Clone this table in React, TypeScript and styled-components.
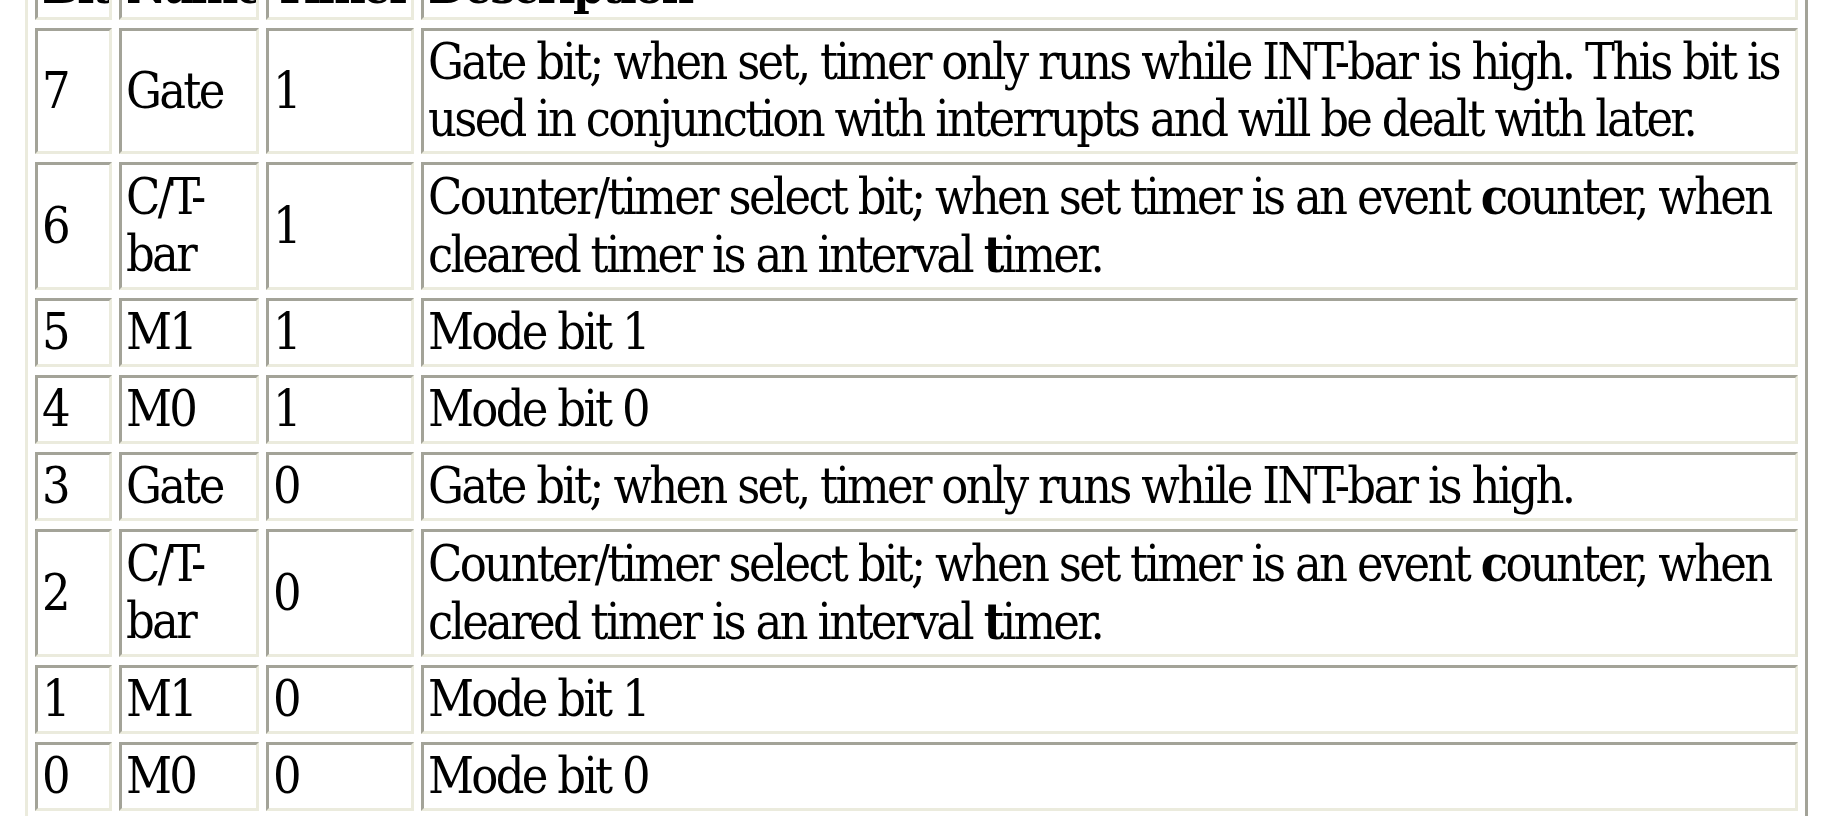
import React from "react";
import styled, { createGlobalStyle } from "styled-components";

const GlobalStyle = createGlobalStyle`
  html, body {
    margin: 0;
    padding: 0;
    background: #ffffff;
    overflow: hidden;
  }
  body {
    font-family: "DejaVu Serif Condensed", "DejaVu Serif", serif;
    font-stretch: condensed;
    color: #000;
  }
`;

type Row = {
  bit: string;
  name: React.ReactNode;
  timer: string;
  desc: React.ReactNode;
};

const counterDesc = (
  <>
    Counter/timer select bit; when set timer is an event <b>c</b>ounter, when
    cleared timer is an interval <b>t</b>imer.
  </>
);

const rows: Row[] = [
  {
    bit: "7",
    name: "Gate",
    timer: "1",
    desc: "Gate bit; when set, timer only runs while INT-bar is high. This bit is used in conjunction with interrupts and will be dealt with later.",
  },
  { bit: "6", name: "C/T-bar", timer: "1", desc: counterDesc },
  { bit: "5", name: "M1", timer: "1", desc: "Mode bit 1" },
  { bit: "4", name: "M0", timer: "1", desc: "Mode bit 0" },
  {
    bit: "3",
    name: "Gate",
    timer: "0",
    desc: "Gate bit; when set, timer only runs while INT-bar is high.",
  },
  { bit: "2", name: "C/T-bar", timer: "0", desc: counterDesc },
  { bit: "1", name: "M1", timer: "0", desc: "Mode bit 1" },
  { bit: "0", name: "M0", timer: "0", desc: "Mode bit 0" },
];

export default function App() {
  return (
    <>
      <GlobalStyle />
      <Page>
        <RegisterTable>
          <colgroup>
            <col style={{ width: 77 }} />
            <col style={{ width: 140 }} />
            <col style={{ width: 148 }} />
            <col />
          </colgroup>
          <thead>
            <tr>
              <HeadCell>Bit</HeadCell>
              <HeadCell>Name</HeadCell>
              <HeadCell>Timer</HeadCell>
              <HeadCell>Description</HeadCell>
            </tr>
          </thead>
          <tbody>
            {rows.map((r) => (
              <tr key={r.bit}>
                <Cell>{r.bit}</Cell>
                <Cell>{r.name}</Cell>
                <Cell>{r.timer}</Cell>
                <Cell>{r.desc}</Cell>
              </tr>
            ))}
          </tbody>
        </RegisterTable>
      </Page>
    </>
  );
}

const Page = styled.div`
  padding-left: 25px;
  margin-top: -60px;
`;

const RegisterTable = styled.table`
  width: 1783px;
  table-layout: fixed;
  border-collapse: separate;
  border-spacing: 7px 8px;
  border-width: 3px;
  border-style: solid;
  border-color: #ebebdd #a3a398 #a3a398 #ebebdd;
  background: #ffffff;
`;

const Cell = styled.td`
  box-sizing: border-box;
  padding: 3px 2px 3px 4px;
  vertical-align: middle;
  text-align: left;
  border-width: 3px;
  border-style: solid;
  border-color: #a3a398 #ebebdd #ebebdd #a3a398;
  background: #ffffff;
  font-family: "DejaVu Serif Condensed", "DejaVu Serif", serif;
  font-stretch: condensed;
  font-size: 50px;
  line-height: 57px;
  letter-spacing: -2.7px;

  b {
    font-weight: bold;
  }
`;

const HeadCell = styled(Cell).attrs({ as: "th" })`
  font-weight: bold;
  white-space: nowrap;
  overflow: hidden;
`;
